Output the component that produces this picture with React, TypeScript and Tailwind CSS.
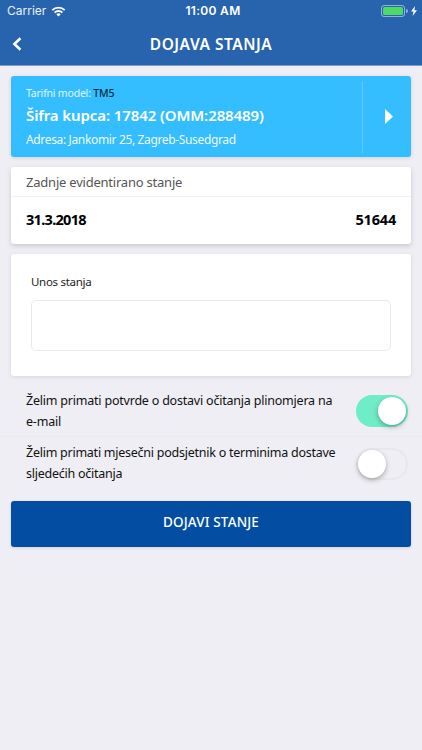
import { useState } from 'react'
import clsx from 'clsx'

function StatusBar() {
  return (
    <div className="grid h-[22px] grid-cols-3 items-center pl-[7px] pr-[5px] font-['Inter','Liberation_Sans',sans-serif] text-[12px] leading-none">
      <div className="flex items-center gap-[5px]">
        <span className="text-white/90">Carrier</span>
        <svg width="15" height="11" viewBox="0 0 14 11" fill="none" stroke="white" strokeWidth="1.9">
          <path d="M0.8 4.2a8.8 8.8 0 0 1 12.4 0" />
          <path d="M3.1 6.6a5.5 5.5 0 0 1 7.8 0" />
          <path d="M7 10.6 4.9 8.4a3 3 0 0 1 4.2 0z" fill="white" stroke="none" />
        </svg>
      </div>
      <span className="whitespace-nowrap pl-[2px] text-center font-semibold tracking-[0.3px]">11:00 AM</span>
      <div className="flex items-center justify-end">
        <div className="h-[12px] w-[24px] rounded-[3px] border border-white/50 p-px">
          <div className="h-full w-full rounded-[1.5px] bg-[#4cd964]" />
        </div>
        <div className="ml-px h-[4px] w-[1.5px] rounded-r-full bg-white/50" />
        <svg className="ml-[3.5px]" width="6" height="10" viewBox="0 0 6 10" fill="white">
          <path d="M4 0 0 5.6h2.5L1.6 10 6 4.2H3.4z" />
        </svg>
      </div>
    </div>
  )
}

function Toggle({ checked, onChange, label }: { checked: boolean; onChange: () => void; label: string }) {
  return (
    <button
      type="button"
      role="switch"
      aria-checked={checked}
      aria-label={label}
      onClick={onChange}
      className={clsx(
        'flex h-[32px] w-[52px] shrink-0 items-center rounded-full',
        checked ? 'justify-end bg-[#6eedc7] pr-[2px]' : 'justify-start border-2 border-[#e8e7eb]'
      )}
    >
      <span className="h-[28px] w-[28px] rounded-full bg-white shadow-[0_2px_5px_rgba(0,0,0,0.3)]" />
    </button>
  )
}

export default function App() {
  const [sendReceipts, setSendReceipts] = useState(true)
  const [sendReminder, setSendReminder] = useState(false)
  const [reading, setReading] = useState('')

  return (
    <div className="flex h-[750px] w-[422px] flex-col overflow-hidden bg-[#efeef4] font-['Noto_Sans','Liberation_Sans',sans-serif] text-black">
      <header className="h-[66px] shrink-0 border-b border-[#7a9dcd] bg-[#2764ad] text-white">
        <StatusBar />
        <div className="grid h-[43px] grid-cols-[32px_1fr_32px] items-center">
          <button type="button" aria-label="Natrag" className="pl-[12px]">
            <svg width="10" height="14" viewBox="0 0 10 14" fill="none" stroke="white" strokeWidth="2.6">
              <path d="M8.4 1.2 2.4 7l6 5.8" />
            </svg>
          </button>
          <h1 className="pt-[2px] text-center text-[15.5px] font-semibold leading-none tracking-[0.5px]">
            DOJAVA STANJA
          </h1>
        </div>
      </header>

      <main className="flex flex-col px-[11px] pt-[10px]">
        <section className="flex h-[81px] items-center rounded-[3px] bg-[#34beff] text-white shadow-[0_1px_4px_rgba(0,0,0,0.12)]">
          <div className="flex-1 whitespace-nowrap pl-[15px]">
            <p className="text-[10.5px] leading-[16px] tracking-[-0.2px] text-white/85">
              Tarifni model: <span className="font-medium text-[#0b2a40]">TM5</span>
            </p>
            <p className="mt-[2px] text-[15px] font-semibold leading-[24px] tracking-[-0.1px]">
              Šifra kupca: 17842 (OMM:288489)
            </p>
            <p className="mt-[4px] text-[12px] leading-[18px] tracking-[-0.35px] text-white/95">
              Adresa: Jankomir 25, Zagreb-Susedgrad
            </p>
          </div>
          <div className="flex h-[72px] w-[49px] items-center border-l border-[#5fcaff] pl-[22px]">
            <svg width="8" height="15" viewBox="0 0 8 15" fill="white">
              <path d="M0 0 8 7.5 0 15z" />
            </svg>
          </div>
        </section>

        <section className="mt-[10px] h-[77px] rounded-[3px] bg-white shadow-[0_2px_5px_rgba(0,0,0,0.16)]">
          <h2 className="h-[30px] border-b border-[#f2f2f4] pl-[15px] text-[13px] leading-[30px] tracking-[-0.22px] text-[#555]">
            Zadnje evidentirano stanje
          </h2>
          <div className="flex h-[46px] items-center justify-between px-[15px] text-[14.5px] font-bold">
            <span className="tracking-[-0.7px]">31.3.2018</span>
            <span className="tracking-[-0.2px]">51644</span>
          </div>
        </section>

        <section className="mt-[10px] h-[122px] rounded-[3px] bg-white px-[20px] pt-[19px] shadow-[0_1px_4px_rgba(0,0,0,0.1)]">
          <label htmlFor="reading" className="block text-[11.5px] leading-[18px] tracking-[-0.3px] text-[#222]">
            Unos stanja
          </label>
          <input
            id="reading"
            value={reading}
            onChange={(e) => setReading(e.target.value)}
            className="mt-[9px] block h-[51px] w-full rounded-[5px] border border-[#e9e9eb] px-3 text-sm outline-none"
          />
        </section>
      </main>

      <div className="flex h-[61px] border-b border-[#ebeaef] pl-[26px] pr-[14px] pt-[14px] text-[12.5px] leading-[21px] tracking-[-0.21px] text-[#111]">
        <p className="w-0 flex-1 whitespace-nowrap">
          Želim primati potvrde o dostavi očitanja plinomjera na
          <br />
          e-mail
        </p>
        <div className="pt-[5px]">
          <Toggle checked={sendReceipts} onChange={() => setSendReceipts(!sendReceipts)} label="Potvrde na e-mail" />
        </div>
      </div>
      <div className="flex h-[64px] pl-[26px] pr-[14px] pt-[5px] text-[12.5px] leading-[21px] tracking-[-0.25px] text-[#111]">
        <p className="w-0 flex-1 whitespace-nowrap">
          Želim primati mjesečni podsjetnik o terminima dostave
          <br />
          sljedećih očitanja
        </p>
        <div className="pt-[6px]">
          <Toggle checked={sendReminder} onChange={() => setSendReminder(!sendReminder)} label="Mjesečni podsjetnik" />
        </div>
      </div>

      <button
        type="button"
        className="mx-[11px] h-[46px] shrink-0 rounded-[3px] bg-[#034ea2] pb-[3px] text-[13.5px] font-medium tracking-[0.15px] text-white shadow-[0_1px_3px_rgba(0,0,0,0.12)]"
      >
        DOJAVI STANJE
      </button>
    </div>
  )
}
